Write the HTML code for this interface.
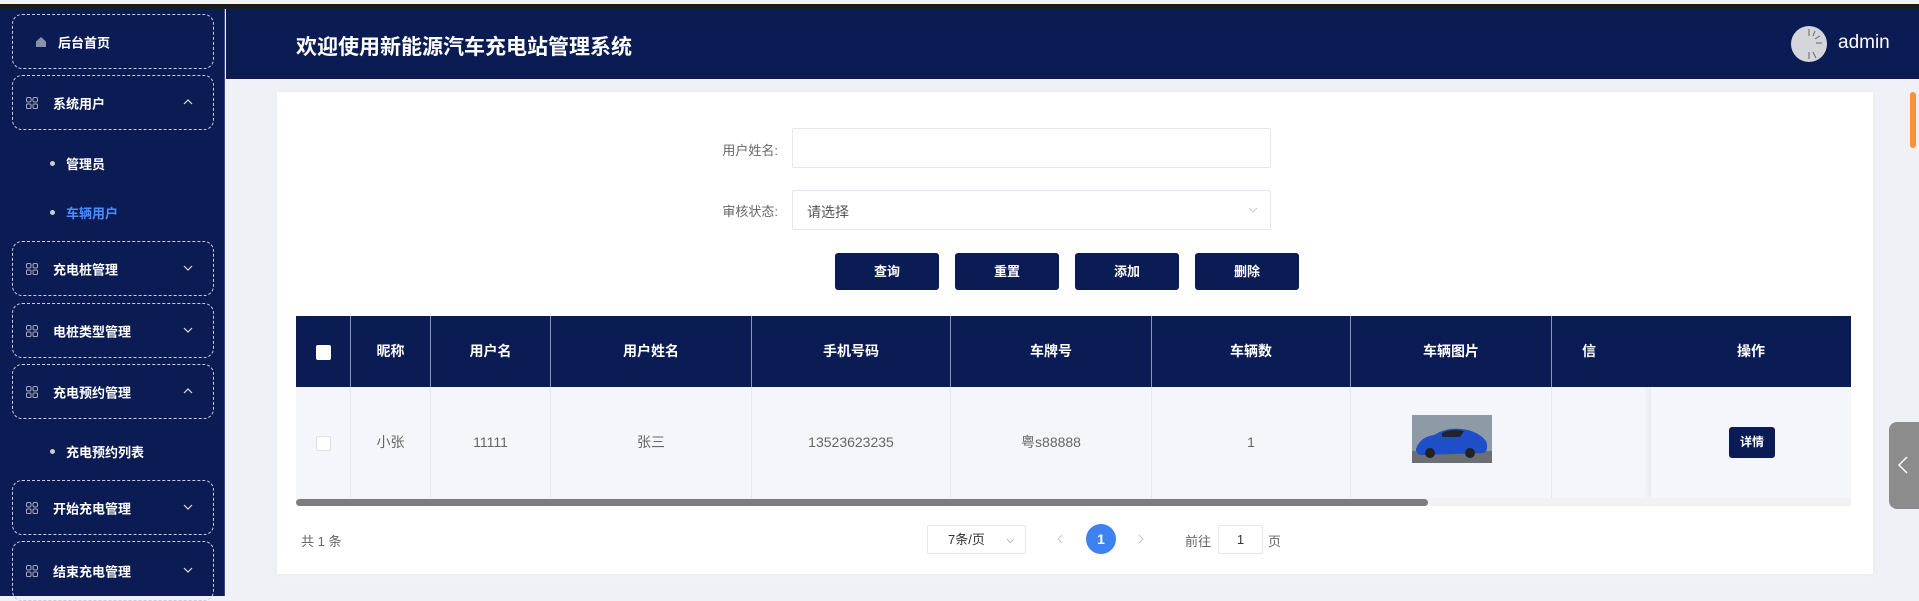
<!DOCTYPE html>
<html><head><meta charset="utf-8"><style>
*{box-sizing:border-box;margin:0;padding:0}
body{width:1919px;height:596px;overflow:hidden;background:#f0f1f7;font-family:"Liberation Sans","Noto Sans CJK SC",sans-serif;position:relative}
.abs{position:absolute}
.top{left:0;top:0;width:1919px;height:4px;background:#f2f2f2}
.blk{left:0;top:4px;width:1919px;height:5px;background:#1b1b1b}
.side{left:0;top:9px;width:225px;height:587px;background:#0b1c54;border-right:1px solid #3a4a7a}
.hdr{left:226px;top:9px;width:1693px;height:70px;background:#0b1c54}
.title{left:296px;top:31px;color:#fff;font-size:21px;font-weight:bold}
.box{position:absolute;left:12px;width:202px;border:1px dashed #c8cde0;border-radius:10px;color:#fff;font-size:13px;font-weight:bold}
.box .ic{position:absolute;left:13px;top:50%;margin-top:-6px;width:12px;height:12px}
.box .t{position:absolute;left:40px;top:50%;transform:translateY(-50%)}
.box .ch{position:absolute;left:170px;top:50%;margin-top:-5px;width:10px;height:8px}
.sub{position:absolute;left:53px;color:#fff;font-size:13px;font-weight:bold}
.sub::before{content:"";position:absolute;left:-3px;top:7px;width:5px;height:5px;border-radius:50%;background:#ccc}
.sub span{margin-left:13px}
.card{left:277px;top:92px;width:1596px;height:482px;background:#fff;box-shadow:0 0 8px rgba(0,0,0,.04)}
.lbl{color:#666;font-size:13px;text-align:right;width:120px}
.inp{border:1px solid #e4e7ed;background:#fff;border-radius:2px}
.btn{background:#0b1c54;color:#fff;font-size:13px;font-weight:bold;border-radius:3px;width:104px;height:37px;line-height:37px;text-align:center}
.th{top:316px;height:71px;background:#0b1c54;border-right:1px solid #8a96b8;color:#fff;font-weight:bold;font-size:14px;text-align:center;line-height:71px}
.td{top:387px;height:111px;background:#f5f6fb;border-right:1px solid #e8eaf0;color:#666;font-size:14px;text-align:center;line-height:111px}
</style></head><body>
<div class="abs top"></div><div class="abs blk"></div>
<div class="abs side">
 <div class="box" style="top:5px;height:55px"><svg class="ic" style="left:22px" viewBox="0 0 12 12"><path d="M6 1L1 5.5V11h10V5.5z" fill="#8a90a8"/></svg><span class="t" style="left:45px">后台首页</span></div>
 <div class="box" style="top:66px;height:55px"><svg class="ic" viewBox="0 0 12 12" fill="none" stroke="#aab"><rect x="0.5" y="0.5" width="4.5" height="4.5" rx="1.5"/><rect x="7" y="0.5" width="4.5" height="4.5" rx="1.5"/><rect x="0.5" y="7" width="4.5" height="4.5" rx="1"/><rect x="7" y="7" width="4.5" height="4.5" rx="1"/></svg><span class="t">系统用户</span><svg class="ch" viewBox="0 0 10 8"><path d="M1 6L5 2L9 6" fill="none" stroke="#ddd" stroke-width="1.2"/></svg></div>
 <div class="sub" style="top:145px"><span>管理员</span></div>
 <div class="sub" style="top:194px;color:#4b8dff"><span>车辆用户</span></div>
 <div class="box" style="top:232px;height:55px"><svg class="ic" viewBox="0 0 12 12" fill="none" stroke="#aab"><rect x="0.5" y="0.5" width="4.5" height="4.5" rx="1.5"/><rect x="7" y="0.5" width="4.5" height="4.5" rx="1.5"/><rect x="0.5" y="7" width="4.5" height="4.5" rx="1"/><rect x="7" y="7" width="4.5" height="4.5" rx="1"/></svg><span class="t">充电桩管理</span><svg class="ch" viewBox="0 0 10 8"><path d="M1 2L5 6L9 2" fill="none" stroke="#ddd" stroke-width="1.2"/></svg></div>
 <div class="box" style="top:294px;height:55px"><svg class="ic" viewBox="0 0 12 12" fill="none" stroke="#aab"><rect x="0.5" y="0.5" width="4.5" height="4.5" rx="1.5"/><rect x="7" y="0.5" width="4.5" height="4.5" rx="1.5"/><rect x="0.5" y="7" width="4.5" height="4.5" rx="1"/><rect x="7" y="7" width="4.5" height="4.5" rx="1"/></svg><span class="t">电桩类型管理</span><svg class="ch" viewBox="0 0 10 8"><path d="M1 2L5 6L9 2" fill="none" stroke="#ddd" stroke-width="1.2"/></svg></div>
 <div class="box" style="top:355px;height:55px"><svg class="ic" viewBox="0 0 12 12" fill="none" stroke="#aab"><rect x="0.5" y="0.5" width="4.5" height="4.5" rx="1.5"/><rect x="7" y="0.5" width="4.5" height="4.5" rx="1.5"/><rect x="0.5" y="7" width="4.5" height="4.5" rx="1"/><rect x="7" y="7" width="4.5" height="4.5" rx="1"/></svg><span class="t">充电预约管理</span><svg class="ch" viewBox="0 0 10 8"><path d="M1 6L5 2L9 6" fill="none" stroke="#ddd" stroke-width="1.2"/></svg></div>
 <div class="sub" style="top:433px"><span>充电预约列表</span></div>
 <div class="box" style="top:471px;height:55px"><svg class="ic" viewBox="0 0 12 12" fill="none" stroke="#aab"><rect x="0.5" y="0.5" width="4.5" height="4.5" rx="1.5"/><rect x="7" y="0.5" width="4.5" height="4.5" rx="1.5"/><rect x="0.5" y="7" width="4.5" height="4.5" rx="1"/><rect x="7" y="7" width="4.5" height="4.5" rx="1"/></svg><span class="t">开始充电管理</span><svg class="ch" viewBox="0 0 10 8"><path d="M1 2L5 6L9 2" fill="none" stroke="#ddd" stroke-width="1.2"/></svg></div>
 <div class="box" style="top:532px;height:60px"><svg class="ic" viewBox="0 0 12 12" fill="none" stroke="#aab"><rect x="0.5" y="0.5" width="4.5" height="4.5" rx="1.5"/><rect x="7" y="0.5" width="4.5" height="4.5" rx="1.5"/><rect x="0.5" y="7" width="4.5" height="4.5" rx="1"/><rect x="7" y="7" width="4.5" height="4.5" rx="1"/></svg><span class="t">结束充电管理</span><svg class="ch" viewBox="0 0 10 8"><path d="M1 2L5 6L9 2" fill="none" stroke="#ddd" stroke-width="1.2"/></svg></div>
</div>
<div class="abs hdr"></div>
<div class="abs title">欢迎使用新能源汽车充电站管理系统</div>
<svg class="abs" style="left:1791px;top:26px" width="36" height="36" viewBox="0 0 36 36"><circle cx="18" cy="18" r="18" fill="#d4d6db"/><g stroke="#666" stroke-width="1"><path d="M18 3v7M24 5l-2 5M29 10l-5 3M31 17h-6M22 26l3 6M18 26v7"/></g></svg>
<div class="abs" style="left:1838px;top:32px;color:#fff;font-size:19px">admin</div>
<div class="abs card"></div>
<div class="abs" style="left:1910px;top:92px;width:6px;height:56px;border-radius:3px;background:#fb8f3a"></div>
<div class="abs lbl" style="left:658px;top:140px">用户姓名:</div>
<div class="abs inp" style="left:792px;top:128px;width:479px;height:40px"></div>
<div class="abs lbl" style="left:658px;top:201px">审核状态:</div>
<div class="abs inp" style="left:792px;top:190px;width:479px;height:40px"><span style="position:absolute;left:14px;top:11px;font-size:14px;color:#555">请选择</span><svg style="position:absolute;right:12px;top:16px" width="10" height="7" viewBox="0 0 10 7"><path d="M1 1L5 5L9 1" fill="none" stroke="#ccc"/></svg></div>
<div class="abs btn" style="left:835px;top:253px">查询</div>
<div class="abs btn" style="left:955px;top:253px">重置</div>
<div class="abs btn" style="left:1075px;top:253px">添加</div>
<div class="abs btn" style="left:1195px;top:253px">删除</div>
<div class="abs th" style="left:296px;width:55px"><span style="display:inline-block;width:15px;height:15px;background:#fff;border-radius:2px;vertical-align:middle"></span></div>
<div class="abs th" style="left:351px;width:80px">昵称</div>
<div class="abs th" style="left:431px;width:120px">用户名</div>
<div class="abs th" style="left:551px;width:201px">用户姓名</div>
<div class="abs th" style="left:752px;width:199px">手机号码</div>
<div class="abs th" style="left:951px;width:201px">车牌号</div>
<div class="abs th" style="left:1152px;width:199px">车辆数</div>
<div class="abs th" style="left:1351px;width:201px">车辆图片</div>
<div class="abs th" style="left:1552px;width:299px;border:none;text-align:left;padding-left:30px">信</div>
<div class="abs td" style="left:296px;width:55px"><span style="display:inline-block;width:15px;height:15px;background:#fff;border:1px solid #dcdfe6;border-radius:2px;vertical-align:middle"></span></div>
<div class="abs td" style="left:351px;width:80px">小张</div>
<div class="abs td" style="left:431px;width:120px">11111</div>
<div class="abs td" style="left:551px;width:201px">张三</div>
<div class="abs td" style="left:752px;width:199px">13523623235</div>
<div class="abs td" style="left:951px;width:201px">粤s88888</div>
<div class="abs td" style="left:1152px;width:199px">1</div>
<div class="abs td" style="left:1351px;width:201px"></div>
<div class="abs td" style="left:1552px;width:299px"></div>
<svg class="abs" style="left:1412px;top:415px" width="80" height="48" viewBox="0 0 80 48"><rect width="80" height="48" fill="#8e9ba6"/><rect y="36" width="80" height="12" fill="#6b6e72"/><path d="M4 34Q8 22 22 20Q34 12 50 14Q66 16 74 26Q77 34 72 38L10 40Q4 40 4 34z" fill="#1f4fc8"/><circle cx="18" cy="38" r="5" fill="#222"/><circle cx="58" cy="38" r="5" fill="#222"/><path d="M30 18Q40 13 52 16L48 22L30 22z" fill="#223"/></svg>
<div class="abs" style="left:1651px;top:387px;width:200px;height:111px;background:#f5f6fb;box-shadow:-3px 0 6px rgba(0,0,0,.06)"></div>
<div class="abs" style="left:1651px;top:316px;width:200px;height:71px;background:#0b1c54;color:#fff;font-weight:bold;font-size:14px;text-align:center;line-height:71px">操作</div>
<div class="abs" style="left:1729px;top:427px;width:46px;height:31px;background:#0b1c54;border-radius:3px;color:#fff;font-size:12px;font-weight:bold;text-align:center;line-height:31px">详情</div>
<div class="abs" style="left:296px;top:498px;width:1555px;height:8px;background:#f2f2f2"></div>
<div class="abs" style="left:296px;top:499px;width:1132px;height:7px;background:#7d7d80;border-radius:4px"></div>
<div class="abs" style="left:301px;top:531px;color:#666;font-size:13px">共 1 条</div>
<div class="abs inp" style="left:927px;top:525px;width:99px;height:29px;font-size:13px;color:#333;line-height:27px;padding-left:20px">7条/页<svg style="position:absolute;right:10px;top:12px" width="9" height="6" viewBox="0 0 9 6"><path d="M1 1L4.5 4.5L8 1" fill="none" stroke="#bbb"/></svg></div>
<svg class="abs" style="left:1057px;top:534px" width="6" height="10" viewBox="0 0 6 10"><path d="M5 1L1 5L5 9" fill="none" stroke="#c0c4cc"/></svg>
<div class="abs" style="left:1086px;top:524px;width:30px;height:30px;border-radius:50%;background:#3d82f0;color:#fff;font-weight:bold;font-size:14px;text-align:center;line-height:30px">1</div>
<svg class="abs" style="left:1138px;top:534px" width="6" height="10" viewBox="0 0 6 10"><path d="M1 1L5 5L1 9" fill="none" stroke="#c0c4cc"/></svg>
<div class="abs" style="left:1185px;top:531px;color:#666;font-size:13px">前往</div>
<div class="abs inp" style="left:1218px;top:525px;width:45px;height:29px;text-align:center;line-height:27px;font-size:13px;color:#333">1</div>
<div class="abs" style="left:1268px;top:531px;color:#666;font-size:13px">页</div>
<div class="abs" style="left:1889px;top:422px;width:30px;height:87px;background:#8c8c8c;border-radius:8px 0 0 8px"><svg style="position:absolute;left:9px;top:34px" width="10" height="18" viewBox="0 0 10 18"><path d="M9 1L1 9L9 17" fill="none" stroke="#fff" stroke-width="1.5"/></svg></div>
</body></html>
